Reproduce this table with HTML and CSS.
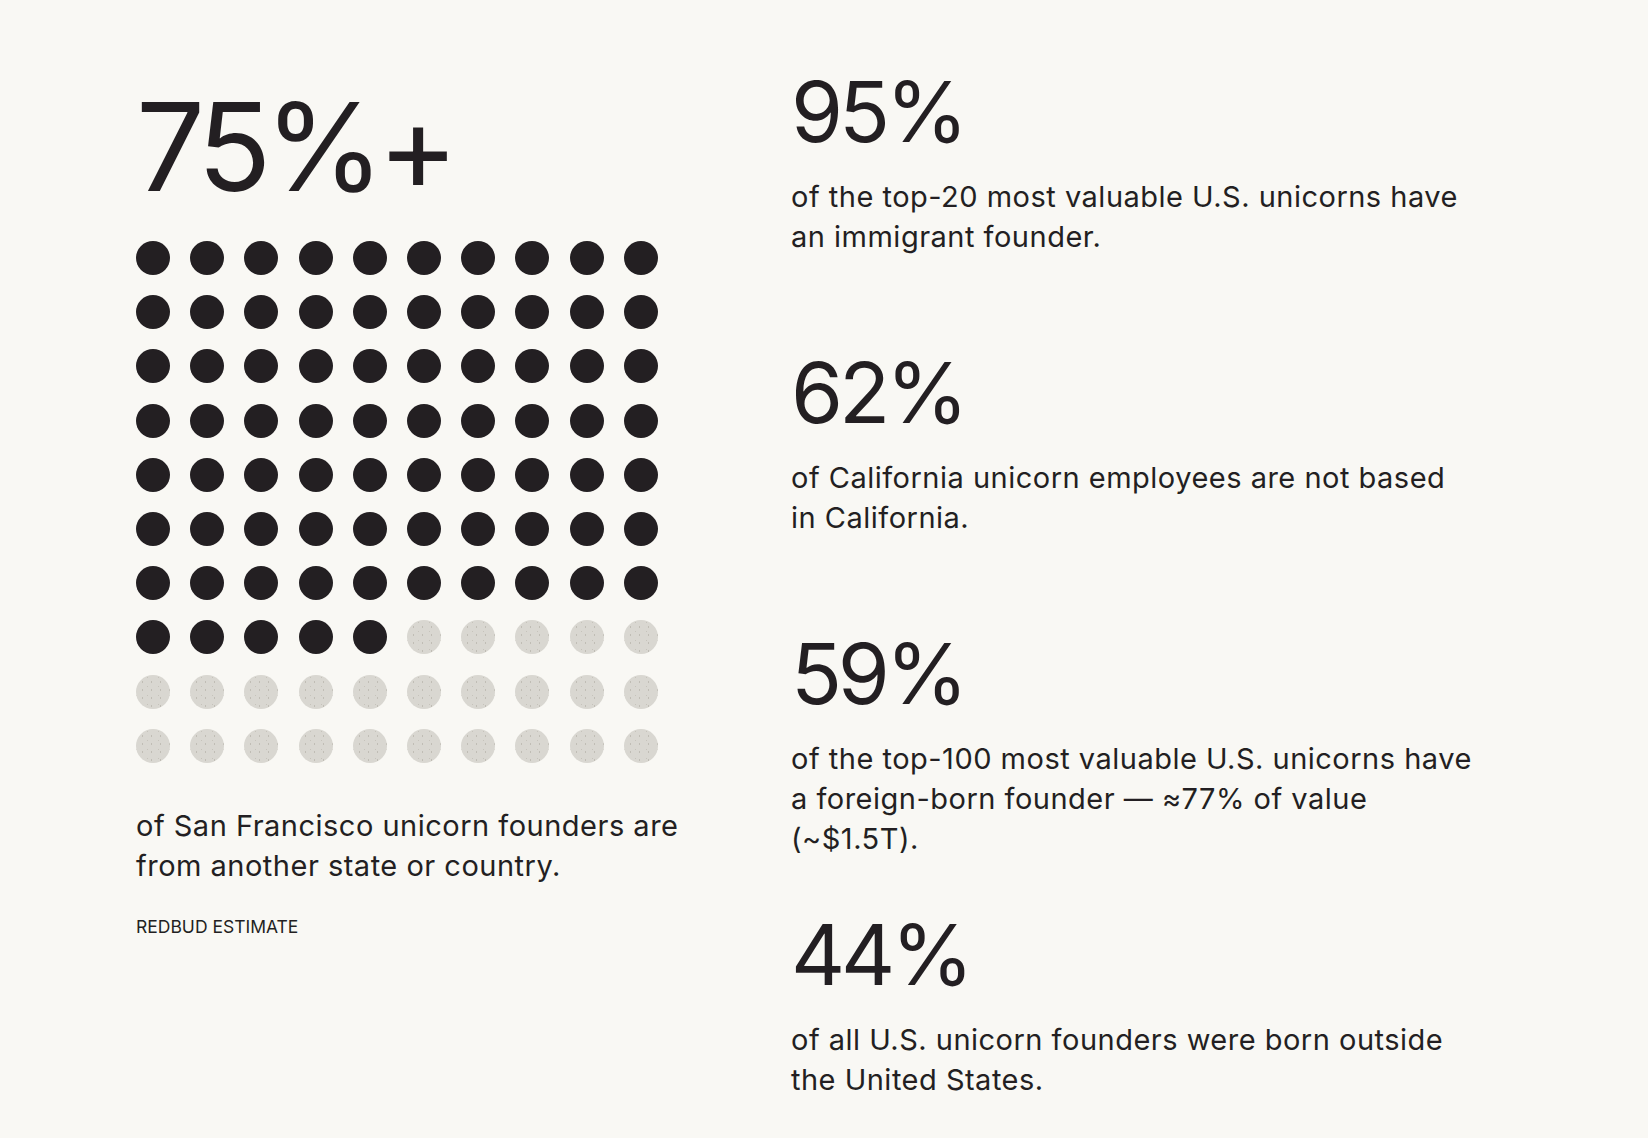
FILE: index.html
```html
<!DOCTYPE html>
<html lang="en">
<head>
<meta charset="utf-8">
<title>Unicorn founders</title>
<link rel="stylesheet" href="styles.css">
</head>
<body>
<main class="page">
  <section class="lead">
    <div class="lead-num">75%+</div>
    <div class="dots">
      <span class="dot on"></span><span class="dot on"></span><span class="dot on"></span><span class="dot on"></span><span class="dot on"></span><span class="dot on"></span><span class="dot on"></span><span class="dot on"></span><span class="dot on"></span><span class="dot on"></span>
      <span class="dot on"></span><span class="dot on"></span><span class="dot on"></span><span class="dot on"></span><span class="dot on"></span><span class="dot on"></span><span class="dot on"></span><span class="dot on"></span><span class="dot on"></span><span class="dot on"></span>
      <span class="dot on"></span><span class="dot on"></span><span class="dot on"></span><span class="dot on"></span><span class="dot on"></span><span class="dot on"></span><span class="dot on"></span><span class="dot on"></span><span class="dot on"></span><span class="dot on"></span>
      <span class="dot on"></span><span class="dot on"></span><span class="dot on"></span><span class="dot on"></span><span class="dot on"></span><span class="dot on"></span><span class="dot on"></span><span class="dot on"></span><span class="dot on"></span><span class="dot on"></span>
      <span class="dot on"></span><span class="dot on"></span><span class="dot on"></span><span class="dot on"></span><span class="dot on"></span><span class="dot on"></span><span class="dot on"></span><span class="dot on"></span><span class="dot on"></span><span class="dot on"></span>
      <span class="dot on"></span><span class="dot on"></span><span class="dot on"></span><span class="dot on"></span><span class="dot on"></span><span class="dot on"></span><span class="dot on"></span><span class="dot on"></span><span class="dot on"></span><span class="dot on"></span>
      <span class="dot on"></span><span class="dot on"></span><span class="dot on"></span><span class="dot on"></span><span class="dot on"></span><span class="dot on"></span><span class="dot on"></span><span class="dot on"></span><span class="dot on"></span><span class="dot on"></span>
      <span class="dot on"></span><span class="dot on"></span><span class="dot on"></span><span class="dot on"></span><span class="dot on"></span><span class="dot off"></span><span class="dot off"></span><span class="dot off"></span><span class="dot off"></span><span class="dot off"></span>
      <span class="dot off"></span><span class="dot off"></span><span class="dot off"></span><span class="dot off"></span><span class="dot off"></span><span class="dot off"></span><span class="dot off"></span><span class="dot off"></span><span class="dot off"></span><span class="dot off"></span>
      <span class="dot off"></span><span class="dot off"></span><span class="dot off"></span><span class="dot off"></span><span class="dot off"></span><span class="dot off"></span><span class="dot off"></span><span class="dot off"></span><span class="dot off"></span><span class="dot off"></span>
    </div>
    <p class="body lead-text">of San Francisco unicorn founders are<br>from another state or country.</p>
    <p class="source">REDBUD ESTIMATE</p>
  </section>
  <section class="stats">
    <div class="stat">
      <div class="stat-num">95%</div>
      <p class="body">of the top-20 most valuable U.S. unicorns have<br>an immigrant founder.</p>
    </div>
    <div class="stat">
      <div class="stat-num">62%</div>
      <p class="body">of California unicorn employees are not based<br>in California.</p>
    </div>
    <div class="stat">
      <div class="stat-num">59%</div>
      <p class="body">of the top-100 most valuable U.S. unicorns have<br>a foreign-born founder — ≈77% of value<br>(~$1.5T).</p>
    </div>
    <div class="stat">
      <div class="stat-num">44%</div>
      <p class="body">of all U.S. unicorn founders were born outside<br>the United States.</p>
    </div>
  </section>
</main>
</body>
</html>
```
FILE: styles.css
```css
html, body {
  margin: 0;
  padding: 0;
  background: #f9f8f4;
}
body {
  font-family: "Inter", "Liberation Sans", sans-serif;
  color: #231f22;
  min-height: 1138px;
}
.page {
  display: grid;
  grid-template-columns: 600px 1fr;
  column-gap: 55px;
  padding: 70px 0 0 136px;
}
.lead {
  padding-top: 16px;
}
.lead-num {
  font-size: 122px;
  line-height: 1;
  font-weight: 400;
  letter-spacing: -0.055em;
}
.dots {
  margin-top: 33px;
  display: grid;
  grid-template-columns: repeat(10, 34px);
  grid-auto-rows: 34px;
  gap: 20.2px;
}
.dot {
  display: block;
  width: 34px;
  height: 34px;
  border-radius: 50%;
}
.dot.on {
  background: #231f22;
}
.dot.off {
  background-color: #d9d7d1;
  background-image:
    radial-gradient(circle, #c0bdb5 0.6px, transparent 1px),
    radial-gradient(circle, #c6c3bb 0.6px, transparent 1px);
  background-size: 9px 8px, 11px 9px;
  background-position: 2px 3px, 6px 7px;
}
.body {
  margin: 0;
  font-size: 29px;
  line-height: 40px;
  font-weight: 400;
  letter-spacing: 0.017em;
}
.lead-text {
  margin-top: 43px;
  max-width: 640px;
}
.source {
  margin: 31px 0 0;
  font-size: 17.5px;
  line-height: 20px;
  letter-spacing: 0;
  text-transform: uppercase;
}
.stats {
  display: grid;
  grid-auto-rows: 281px;
}
.stat-num {
  font-size: 84px;
  line-height: 1;
  letter-spacing: -0.05em;
}
.stat .body {
  margin-top: 23px;
  max-width: 760px;
}
```
